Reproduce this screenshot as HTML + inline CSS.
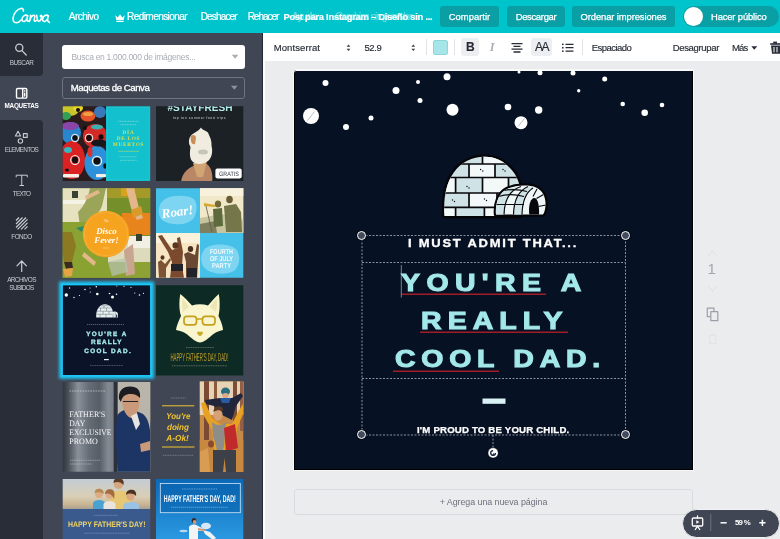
<!DOCTYPE html>
<html>
<head>
<meta charset="utf-8">
<title>Canva</title>
<style>
*{box-sizing:border-box;margin:0;padding:0}
html,body{width:780px;height:539px;overflow:hidden;background:#ebecee;font-family:"Liberation Sans",sans-serif;}
.abs{position:absolute}
#app{position:relative;width:780px;height:539px;overflow:hidden;background:#ebecee;will-change:transform}
/* top bar */
#top{position:absolute;left:0;top:0;width:780px;height:33px;background:#00c4cc}
#top .mi{position:absolute;top:10.3px;font-size:10px;-webkit-text-stroke:.2px #fff;color:#fff;white-space:nowrap;line-height:14px}
#top .btn{position:absolute;top:6px;height:21px;border-radius:3px;background:#0a9ea5;color:#fff;font-size:9.4px;-webkit-text-stroke:.25px #fff;line-height:21px;text-align:center;white-space:nowrap}
/* toolbar */
#tb{position:absolute;left:263px;top:33px;width:517px;height:28px;background:#fff}
#tb .t{position:absolute;top:7.8px;font-size:9.5px;line-height:13px;color:#272b36;-webkit-text-stroke:.15px #272b36;white-space:nowrap}
#tb .dv{position:absolute;top:6px;width:1px;height:16px;background:#e1e3e6}
/* sidebar */
#side{position:absolute;left:0;top:33px;width:43px;height:506px;background:#292d37}
#side .lab{position:absolute;left:0;width:43px;text-align:center;font-size:6.4px;line-height:8px;color:#c9ccd2;letter-spacing:-0.25px;z-index:3;white-space:nowrap}
#panel{position:absolute;left:43px;top:33px;width:220px;height:506px;background:#404654}
.th{position:absolute;overflow:hidden}
/* canvas */
#cv{position:absolute;left:294px;top:70px;width:399px;height:400px;background:#071124;border-radius:2.5px 0 0 0;box-shadow:0 0 0 1px #f8f8f9, inset 0 1px 0 #f8f8f9, inset -1px -1px 0 #000, inset 1px 0 0 #000}
.dot{position:absolute;background:#fff;border-radius:50%}
.hd{position:absolute;width:9.4px;height:9.4px;border-radius:50%;border:1.7px solid #fff;background:#434c5e;box-shadow:0 0 0 .8px rgba(0,0,0,.55)}
.dt{position:absolute;font-weight:bold;white-space:nowrap;line-height:1;transform-origin:0 0;transform:scaleX(1.16)}
.big{-webkit-text-stroke:1.1px #a3e8ea}
</style>
</head>
<body>
<div id="app">

<!-- ============ TOP BAR ============ -->
<div id="top">
  <svg class="abs" style="left:0;top:0" width="60" height="33" viewBox="0 0 60 33">
    <g fill="none" stroke="#fff" stroke-width="1.55" stroke-linecap="round" stroke-linejoin="round">
      <path d="M23.300 11.200c.5-1.700-.6-3-2.400-2.800-3.300.4-7.200 4.700-7.800 9.300-.4 3.200.8 5.100 3 5.100 1.800 0 3.600-1.100 5-2.900"/>
      <path d="M27.600 16.200c-.8-1.500-2.800-1.400-4.200.1-1.500 1.600-1.900 4-.7 4.900 1.200.9 3.200-.3 4.200-2.400l.9-3.100c-.5 1.800-1.200 4-.6 5.100.5.900 1.500.4 2.300-.6"/>
      <path d="M30.600 15.200c0 2.200-.7 4.300-1.100 6.200.6-2.300 2-5.400 3.900-6.100 1.300-.4 1.600.7 1.300 2-.3 1.300-.9 2.800-.3 3.600.5.600 1.300.2 2-.5"/>
      <path d="M36.700 15.300c.4 1.800.4 4.700 1.500 5.800 1.300 1 3.300-2 3.600-4.300.2-1.300-.5-1.900-1.200-1.300-.7.700.4 1.700 1.700 1.200"/>
      <path d="M48.200 16.200c-.8-1.500-2.800-1.400-4.200.1-1.500 1.600-1.900 4-.7 4.900 1.200.9 3.200-.3 4.200-2.400l.9-3.100c-.5 1.800-1.200 4-.6 5.100.5.900 1.300 1 1.700 1.700"/>
    </g>
  </svg>
  <div class="mi" id="m1" style="left:68.7px;letter-spacing:-0.48px">Archivo</div>
  <svg class="abs" style="left:114.700px;top:13.700px" width="10" height="8.400" viewBox="0 0 10 8" preserveAspectRatio="none"><path d="M0.300 1.200 L2.700 3.400 L5 0.200 L7.300 3.400 L9.700 1.200 L8.600 6 H1.400 Z M1.400 6.700 H8.600 V7.800 H1.400Z" fill="#fff"/></svg>
  <div class="mi" id="m2" style="left:127.0px;letter-spacing:-0.55px">Redimensionar</div>
  <div class="mi" id="m3" style="left:200.7px;letter-spacing:-0.83px">Deshacer</div>
  <div class="mi" id="m4" style="left:247.7px;letter-spacing:-1.04px">Rehacer</div>
  <div class="mi" id="m5" style="left:292.0px;opacity:.45;letter-spacing:-0.80px">Ayuda</div>
  <div class="mi" id="m6" style="left:335.0px;opacity:.4;font-style:italic;letter-spacing:-0.85px">Cambios sin guardar</div>
  <div class="mi" id="m7" style="left:283.4px;top:9.5px;font-weight:bold;font-size:9.4px;letter-spacing:-0.26px">Post para Instagram – Diseño sin ...</div>
  <div class="btn" style="left:440px;width:59px"><span id="b1" style=";letter-spacing:0.02px">Compartir</span></div>
  <div class="btn" style="left:507px;width:58px"><span id="b2" style=";letter-spacing:-0.29px">Descargar</span></div>
  <div class="btn" style="left:572px;width:103px"><span id="b3" style=";letter-spacing:-0.09px">Ordenar impresiones</span></div>
  <div class="btn" style="left:683px;width:96px;border-radius:11px;text-align:left;padding-left:28px"><span id="b4" style=";letter-spacing:-0.13px">Hacer público</span></div>
  <div class="abs" style="left:684px;top:7px;width:19px;height:19px;border-radius:50%;background:#fff"></div>
</div>

<!-- ============ SIDEBAR ============ -->
<div id="side">
  <div class="abs" style="left:0;top:0;width:43px;height:43px;background:#292d37;border-radius:0 0 4px 0;z-index:2"></div>
  <div class="abs" style="left:0;top:39px;width:43px;height:52px;background:#404654"></div>
  <div class="abs" style="left:0;top:87px;width:43px;height:419px;background:#292d37;border-radius:0 4px 0 0;z-index:2"></div>
  <svg class="abs" style="left:0;top:0;z-index:3" width="43" height="300" viewBox="0 33 43 300">
    <!-- search -->
    <g fill="none" stroke="#c9ccd2" stroke-width="1.300" stroke-linecap="round">
      <circle cx="19.300" cy="47.700" r="3.600"/><path d="M22 50.600 L26.200 55"/>
    </g>
    <!-- maquetas -->
    <g fill="none" stroke="#fff" stroke-width="1.400" stroke-linejoin="round">
      <rect x="16.500" y="88.500" width="10.300" height="9.600" rx="1.200"/>
      <path d="M22.700 88.500 V98"/>
    </g>
    <rect x="24" y="90.300" width="1.400" height="1.400" fill="#fff"/><rect x="24" y="92.700" width="1.400" height="3.800" fill="#fff"/>
    <!-- elementos -->
    <g fill="none" stroke="#c9ccd2" stroke-width="1.100" stroke-linejoin="round">
      <path d="M18 131.300 L20.600 136 H15.400 Z"/>
      <rect x="23.400" y="133.600" width="3.800" height="3.800"/>
      <circle cx="20.400" cy="141" r="2.200"/>
    </g>
    <!-- fondo -->
    <g stroke="#c9ccd2" stroke-width="1.200" stroke-linecap="butt">
      <path d="M16 220.500 L19 217.500 M16 224 L22.500 217.500 M16 227.500 L26 217.500 M17.500 229.300 L27.500 219.300 M21 229.300 L27.500 222.800 M24.500 229.300 L27.500 226.300"/>
    </g>
    <!-- upload -->
    <g fill="none" stroke="#c9ccd2" stroke-width="1.200" stroke-linecap="round" stroke-linejoin="round">
      <path d="M21.700 271.500 V261.200 M17 265.800 L21.700 261 L26.400 265.800"/>
    </g>
  </svg>
  <svg class="abs" style="left:14px;top:140px;z-index:3" width="16" height="14" viewBox="14 173 16 14"><g fill="none" stroke="#c9ccd2" stroke-width="1"><path d="M16.200 177.300 V175.200 H27.300 V177.300 M21.750 175.200 V185.300 M19.500 185.500 H24"/></g></svg>
  <div class="lab" id="s1" style="top:26.0px;letter-spacing:-0.53px">BUSCAR</div>
  <div class="lab" id="s2" style="top:69.0px;color:#fff;font-weight:bold">MAQUETAS</div>
  <div class="lab" id="s3" style="top:113.0px;letter-spacing:-0.66px">ELEMENTOS</div>
  <div class="lab" id="s4" style="top:156.5px;letter-spacing:-0.73px">TEXTO</div>
  <div class="lab" id="s5" style="top:200.0px;letter-spacing:-0.54px">FONDO</div>
  <div class="lab" id="s6" style="top:243.0px;letter-spacing:-0.58px">ARCHIVOS</div>
  <div class="lab" id="s7" style="top:251.0px;letter-spacing:-0.63px">SUBIDOS</div>
</div>

<!-- ============ PANEL ============ -->
<div id="panel">
  <div class="abs" style="left:18.500px;top:12px;width:183.500px;height:24.300px;background:#fff;border-radius:3px;font-size:8.5px;line-height:24px;color:#a9adb5;padding-left:10px"><span id="p1" style=";letter-spacing:-0.30px">Busca en 1.000.000 de imágenes...</span></div>
  <div class="abs" style="left:18.500px;top:43.800px;width:183.300px;height:22.500px;border:1px solid #6f7584;border-radius:3px;font-size:9.6px;line-height:19.500px;color:#fff;padding-left:8.300px;-webkit-text-stroke:.3px #fff"><span id="p2" style=";letter-spacing:-0.43px">Maquetas de Canva</span></div>
</div>

<svg id="thumbs" class="abs" style="left:0;top:0;text-rendering:geometricPrecision" width="263" height="539" viewBox="0 0 263 539">
<defs>
  <filter id="bl1" x="-10%" y="-10%" width="120%" height="120%"><feGaussianBlur stdDeviation="0.65"/></filter>
  <filter id="bl2" x="-10%" y="-10%" width="120%" height="120%"><feGaussianBlur stdDeviation="0.5"/></filter>
  <filter id="glow" x="-20%" y="-20%" width="140%" height="140%"><feGaussianBlur stdDeviation="1.6"/></filter>
  <clipPath id="c11"><rect x="62.700" y="106.200" width="87.500" height="74.800"/></clipPath>
  <clipPath id="c12"><rect x="156" y="106.200" width="87.300" height="74.800"/></clipPath>
  <clipPath id="c21"><rect x="62.700" y="188.200" width="87.500" height="89.600"/></clipPath>
  <clipPath id="c22"><rect x="156" y="188.200" width="87.300" height="89.600"/></clipPath>
  <clipPath id="c31"><rect x="62.700" y="285.200" width="87.500" height="89.800"/></clipPath>
  <clipPath id="c32"><rect x="156" y="285.200" width="87.300" height="90.300"/></clipPath>
  <clipPath id="c41"><rect x="62.700" y="382" width="87.500" height="89.800"/></clipPath>
  <clipPath id="c42"><rect x="199.800" y="381.600" width="43.500" height="90.400"/></clipPath>
  <clipPath id="c51"><rect x="62.700" y="479" width="87.500" height="60"/></clipPath>
  <clipPath id="c52"><rect x="156" y="479" width="87.300" height="60"/></clipPath>
  <linearGradient id="g52" x1="0" y1="0" x2="0" y2="1"><stop offset="0" stop-color="#0b68b6"/><stop offset="1" stop-color="#2b9ae2"/></linearGradient>
  <linearGradient id="g51" x1="0" y1="0" x2="0" y2="1"><stop offset="0" stop-color="#c3ccd6"/><stop offset=".6" stop-color="#d9cfb6"/><stop offset=".85" stop-color="#c9b593"/><stop offset="1" stop-color="#a9a090"/></linearGradient>
  <linearGradient id="g41" x1="0" y1="0" x2="1" y2="0">
    <stop offset="0" stop-color="#2e323a"/><stop offset=".07" stop-color="#4a4f58"/><stop offset=".18" stop-color="#8a919a"/><stop offset=".3" stop-color="#666d77"/><stop offset=".42" stop-color="#585e68"/><stop offset=".52" stop-color="#848a92"/><stop offset=".575" stop-color="#7a8088"/><stop offset=".585" stop-color="#2c303a"/><stop offset=".62" stop-color="#2c303a"/><stop offset=".63" stop-color="#a9abad"/><stop offset=".7" stop-color="#b5b3ac"/><stop offset="1" stop-color="#c3beb2"/>
  </linearGradient>
</defs>

<!-- ===== 1-1 skulls / dia de los muertos ===== -->
<g clip-path="url(#c11)">
  <rect x="62" y="106" width="45" height="76" fill="#2a1c1c"/>
  <g filter="url(#bl2)">
    <ellipse cx="70" cy="110" rx="9" ry="6" fill="#c9c42c"/><ellipse cx="66" cy="116" rx="5" ry="4" fill="#35a055"/>
    <ellipse cx="78" cy="108" rx="5" ry="4" fill="#e8d820"/>
    <ellipse cx="88" cy="116" rx="7.500" ry="5.500" fill="#e4532c"/><ellipse cx="88" cy="114" rx="5" ry="2" fill="#f0a040"/>
    <ellipse cx="100" cy="112" rx="6" ry="6" fill="#3a78b8"/>
    <ellipse cx="71" cy="133" rx="10" ry="11" fill="#2a86cc"/><ellipse cx="70" cy="126" rx="9" ry="4" fill="#8a44a8"/>
    <ellipse cx="95" cy="136" rx="12" ry="12" fill="#d22a28"/><ellipse cx="97" cy="127" rx="6" ry="2.500" fill="#3ab0b0"/>
    <ellipse cx="72" cy="160" rx="13" ry="19" fill="#da2424"/><ellipse cx="68" cy="150" rx="4" ry="3" fill="#30b8c0"/>
    <ellipse cx="97" cy="163" rx="12.500" ry="17" fill="#2e90da"/><ellipse cx="99" cy="143" rx="8" ry="3.500" fill="#15151c"/>
    <ellipse cx="90" cy="152" rx="2.500" ry="5" fill="#d83030"/>
    <g fill="#120c10"><ellipse cx="75" cy="138" rx="2.600" ry="2.800"/><ellipse cx="89" cy="138" rx="2.800" ry="3"/><ellipse cx="101" cy="137" rx="2.500" ry="2.800"/>
      <ellipse cx="75" cy="160" rx="3" ry="3.200"/><ellipse cx="97" cy="161" rx="3.400" ry="3.400"/><ellipse cx="105" cy="166" rx="1.800" ry="2.800"/><ellipse cx="67" cy="170" rx="2" ry="1.500"/>
      <ellipse cx="78" cy="110" rx="2" ry="2"/><ellipse cx="85" cy="128" rx="1.800" ry="2"/></g>
    <g fill="#f4f0e8"><ellipse cx="75" cy="160" rx="4.300" ry="4.500" fill="none" stroke="#f4f0e8" stroke-width="1.200"/><ellipse cx="97" cy="161" rx="4.600" ry="4.600" fill="none" stroke="#f4f0e8" stroke-width="1.200"/>
      <rect x="63" y="174" width="16" height="3.500" rx="1"/><rect x="96" y="174" width="10" height="3.200" rx="1"/>
      <ellipse cx="75" cy="138" rx="3.600" ry="3.800" fill="none" stroke="#f4f0e8" stroke-width="1"/><ellipse cx="89" cy="138" rx="3.800" ry="4" fill="none" stroke="#f4f0e8" stroke-width="1"/></g>
  </g>
  <rect x="106" y="106" width="45" height="76" fill="#13c0cd"/>
  <rect x="107.500" y="107.500" width="41.500" height="72" fill="none" stroke="#7fe0e6" stroke-width=".4" stroke-dasharray=".8 .8" opacity=".6"/>
  <g font-family="Liberation Serif" font-weight="bold" fill="#d9df52" text-anchor="middle">
    <text x="128.500" y="133.700" font-size="5.300" letter-spacing=".7">DÍA</text>
    <text x="128.500" y="140" font-size="5.300" letter-spacing=".7">DE LOS</text>
    <text x="128.500" y="146.300" font-size="5.300" letter-spacing=".7">MUERTOS</text>
  </g>
  <g stroke="#d8f0d8" stroke-width=".8" stroke-dasharray="1 .6" opacity=".6"><path d="M118.500 121.300 H138.500 M120.500 124.700 H136.500 M119.500 156.800 H137 M120 160.300 H136.500"/></g>
  <path d="M118 151.300 H139" stroke="#d9df52" stroke-width=".5"/>
</g>

<!-- ===== 1-2 stayfresh ===== -->
<g clip-path="url(#c12)">
  <rect x="155" y="106" width="89" height="76" fill="#1b2125"/>
  <text x="200" y="110.600" font-family="Liberation Sans" font-weight="bold" font-size="10.500" fill="#b3ecec" text-anchor="middle" textLength="65" lengthAdjust="spacingAndGlyphs">#STAYFRESH</text>
  <text x="199.500" y="118.800" font-family="Liberation Sans" font-size="3.600" fill="#c8cccc" text-anchor="middle" letter-spacing=".5">top ten summer food trips</text>
  <g filter="url(#bl1)">
    <path d="M181 182 C182 172 190 166 197 165 L207 164 C212 168 213 176 212 182 Z" fill="#b98765"/>
    <path d="M193 163 L207 161 L203 177 L197 177 Z" fill="#d2a574"/>
    <path d="M201 127.500 C202 130 205 130 208 132.500 C209 136 212 139 211.500 146 C213 151 212 158 208 161 C203 165 195 165 192 161 C189 157 190 151 190.500 147 C187.500 142 189 136 193.500 133.500 C196 131.500 199 130.500 201 127.500 Z" fill="#f0ece0"/>
    <path d="M191 136 C193 134 196 135 196 138 L195 144 C192 145 190 142 191 136Z" fill="#c98e58"/>
    <ellipse cx="203" cy="152" rx="5" ry="2.500" fill="#b9bcae" opacity=".8"/>
  </g>
  <rect x="215.400" y="168.600" width="26.300" height="9.800" rx="1.800" fill="#fff"/>
  <text transform="translate(229 175.900) scale(.86 1)" font-family="Liberation Sans" font-size="6.300" fill="#30343c" text-anchor="middle">GRATIS</text>
</g>

<!-- ===== 2-1 disco fever ===== -->
<g clip-path="url(#c21)">
  <rect x="62" y="188" width="89" height="90" fill="#869a30"/>
  <g filter="url(#bl1)">
    <rect x="62" y="188" width="46" height="34" fill="#e6e2bf"/>
    <rect x="62" y="200" width="30" height="4" fill="#f4f2e4"/>
    <path d="M90 188 L106 188 L102 206 C98 216 88 224 80 226 L78 212 C84 206 88 198 90 188Z" fill="#9aa55a"/>
    <rect x="72" y="191" width="6" height="7" fill="#3a4034"/>
    <path d="M85 196 L98 190 L100 193 L86 200Z" fill="#e2b78a"/>
    <rect x="107" y="188" width="44" height="48" fill="#75902a"/>
    <rect x="107" y="188" width="44" height="10" fill="#a39a2c"/>
    <rect x="121" y="188" width="14" height="8" fill="#d9a21e"/>
    <rect x="122" y="213" width="29" height="22" fill="#e8841f"/>
    <path d="M126 188 L134 188 L139 208 L143 218 L137 220 L131 208 Z" fill="#e4b78a"/>
    <path d="M131 210 L141 206 L143 214 L133 218Z" fill="#d99a2a"/>
    <rect x="107" y="236" width="44" height="42" fill="#dedabc"/>
    <rect x="107" y="262" width="44" height="16" fill="#8ca236"/>
    <rect x="128" y="236" width="23" height="12" fill="#f2f0e4"/>
    <rect x="136" y="234" width="6" height="7" fill="#3a4034"/>
    <path d="M124 250 L133 244 L135 274 L126 276Z" fill="#c9a48e"/>
    <path d="M108 262 L126 258 L128 272 L112 276Z" fill="#b8c4b0" opacity=".7"/>
    <rect x="62" y="222" width="46" height="56" fill="#8aa232"/>
    <path d="M62 232 L72 232 L76 246 L72 262 L64 262 L62 250Z" fill="#8b7a22"/>
    <path d="M64 262 L72 262 L73 268 L66 269Z" fill="#3a2a20"/>
    <path d="M63 269 L73 268 L72 276 L65 277Z" fill="#e2a444"/>
    <path d="M84 252 L96 262 L94 266 L82 256Z" fill="#e4b78a"/>
    <path d="M76 228 L84 226 L82 232Z" fill="#2a8a6a"/>
  </g>
  <circle cx="106" cy="234" r="23.200" fill="#f6a31f"/>
  <circle cx="106" cy="234" r="21.600" fill="none" stroke="#fbd59a" stroke-width=".5" stroke-dasharray=".7 .7"/>
  <g font-family="Liberation Serif" font-style="italic" font-weight="bold" fill="#fff" text-anchor="middle">
    <text x="106.500" y="233.500" font-size="8.800">Disco</text>
    <text x="106.500" y="242.500" font-size="8.800">Fever!</text>
    <text x="106" y="221.500" font-size="3.600" font-weight="normal">70s</text>
  </g>
  <path d="M103 248 H109" stroke="#fbd59a" stroke-width=".6"/>
</g>
<!-- ===== 2-2 roar / fourth of july ===== -->
<g clip-path="url(#c22)">
  <rect x="155" y="188" width="89" height="90" fill="#45c0e8"/>
  <g filter="url(#bl2)">
    <path d="M160 205 C163 196 178 194 190 197 C198 199 198 210 194 218 C188 226 170 226 162 220 C158 215 158 210 160 205Z" fill="#7ed5f1"/>
    <path d="M204 250 C210 243 228 243 236 249 C241 255 240 266 234 271 C224 276 208 274 203 266 C200 260 201 254 204 250Z" fill="#7ed5f1"/>
  </g>
  <text x="177.500" y="216" font-family="Liberation Serif" font-style="italic" font-weight="bold" font-size="13" fill="#fff" text-anchor="middle" transform="rotate(-8 177.500 212)">Roar!</text>
  <g font-family="Liberation Sans" font-weight="bold" fill="#f2fbfe" text-anchor="middle" font-size="7">
    <text x="221.500" y="253.800" textLength="23" lengthAdjust="spacingAndGlyphs">FOURTH</text>
    <text x="221.500" y="260.800" textLength="23" lengthAdjust="spacingAndGlyphs">OF JULY</text>
    <text x="221.500" y="267.800" textLength="19" lengthAdjust="spacingAndGlyphs">PARTY</text>
  </g>
  <!-- TR photo -->
  <rect x="200" y="188" width="44" height="45" fill="#f1e8c9"/>
  <g filter="url(#bl1)">
    <rect x="200" y="188" width="44" height="8" fill="#f8f2dc"/>
    <path d="M200 218 L222 214 L244 220 L244 233 L200 233Z" fill="#c9c4a0"/>
    <path d="M200 224 L215 221 L217 233 L200 233Z" fill="#7e7f5c"/>
    <ellipse cx="218" cy="204" rx="3.200" ry="3.500" fill="#6f6a3a"/>
    <path d="M213 209 L222 208 L223 226 L214 227Z" fill="#5d6a3a"/>
    <path d="M204 203 L215 205 L215 207 L204 206Z" fill="#d8a830"/>
    <ellipse cx="229.500" cy="199.500" rx="3.300" ry="3.800" fill="#6a5c34"/>
    <path d="M224 206 L236 204 L241 212 L242 232 L226 232 Z" fill="#75764a"/>
    <path d="M206 206 L212 232" stroke="#5a5a48" stroke-width=".8"/>
  </g>
  <!-- BL photo -->
  <rect x="155" y="233" width="45" height="45" fill="#f6e4c2"/>
  <g filter="url(#bl1)">
    <rect x="155" y="233" width="45" height="10" fill="#fbf2dc"/>
    <path d="M158 236 L162 235 L172 250 L178 248 L177 238 L180 237 L183 252 L182 266 L184 278 L170 278 L172 262 L168 252 Z" fill="#7a4a2e"/>
    <ellipse cx="175.500" cy="245.500" rx="3" ry="3.300" fill="#5a3422"/>
    <path d="M171 264 H183 V271 H171Z" fill="#22222a"/>
    <path d="M184 254 L188 252 L195 255 L197 244 L199 245 L198 262 L197 278 L186 278 L186 262Z" fill="#6a4630"/>
    <ellipse cx="190.500" cy="249" rx="2.700" ry="3" fill="#4a2e20"/>
    <path d="M187 268 H197 V278 H187Z" fill="#22242c"/>
    <path d="M158 262 L161 260 L165 264 L170 258 L171 260 L166 268 L166 278 L159 278 Z" fill="#7e5236"/>
    <ellipse cx="162.500" cy="257.500" rx="2" ry="2.300" fill="#55341f"/>
  </g>
</g>

<!-- ===== 3-1 selected (cool dad) ===== -->
<rect x="61.300" y="283.800" width="90.400" height="92.700" fill="none" stroke="#18c8f8" stroke-width="4.400" filter="url(#glow)"/>
<rect x="62.700" y="285.200" width="87.500" height="89.900" fill="#0a1328"/>
<g clip-path="url(#c31)">
  <g fill="#fff">
    <circle cx="66.300" cy="295" r="1.700"/><circle cx="69.500" cy="288" r=".7"/><circle cx="74" cy="297.500" r=".7"/><circle cx="79.500" cy="295.500" r=".6"/><circle cx="85" cy="289.500" r=".8"/>
    <circle cx="90" cy="288" r=".5"/><circle cx="90.300" cy="292" r=".6"/><circle cx="96.300" cy="286.800" r=".8"/><circle cx="97.300" cy="294" r="1.300"/><circle cx="109.500" cy="293.500" r=".8"/>
    <circle cx="112.500" cy="297" r="1.500"/><circle cx="116.500" cy="294.300" r=".8"/><circle cx="116.800" cy="286" r=".6"/><circle cx="124" cy="286.300" r=".6"/><circle cx="131" cy="287.300" r=".6"/><circle cx="134.800" cy="293" r=".6"/><circle cx="139.500" cy="295" r=".8"/><circle cx="143.500" cy="293.300" r=".6"/>
  </g>
  <path d="M96.200 317.500 C95.800 309 100 304.300 105 304.300 C110 304.300 112.800 308.500 112.800 312 C115 311 118 311.500 118 314.500 L118 317.500 Z" fill="#e6f0f1"/>
  <g stroke="#26303e" stroke-width=".35" fill="none"><path d="M96.500 314.300 H112 M97 311.200 H112.600 M98.500 308 H111.500 M101 305.800 H109 M100 314.300 V317.500 M106 314.300 V317.500 M103 311.200 V314.300 M109 311.200 V314.300 M100.500 308 V311.200 M106.500 308 V311.200 M104 305.800 V308 M113 313.500 V317.500 M115.300 312.500 V317.500"/></g>
  <rect x="116.200" y="314.600" width="1" height="2.900" fill="#0a1328"/>
  <path d="M87 324.400 H124" stroke="#c9ced6" stroke-width=".8" stroke-dasharray="1.300 .7" opacity=".55"/>
  <g font-family="Liberation Sans" font-weight="bold" fill="#a3e8ea" stroke="#a3e8ea" stroke-width=".35" text-anchor="middle" font-size="6.300">
    <text x="106.200" y="335.600" textLength="40" lengthAdjust="spacing">YOU'RE A</text>
    <text x="106.200" y="344.100" textLength="30.500" lengthAdjust="spacing">REALLY</text>
    <text x="107.500" y="352.800" textLength="46.500" lengthAdjust="spacing">COOL DAD.</text>
  </g>
  <rect x="104" y="359" width="4.800" height="1.200" fill="#e2f4f5"/>
  <path d="M90 365.600 H123" stroke="#b4bac4" stroke-width=".8" stroke-dasharray="1.100 .6" opacity=".55"/>
</g>
<rect x="62" y="284.500" width="89" height="91.300" fill="none" stroke="#1bc8f6" stroke-width="1.500"/>

<!-- ===== 3-2 fox ===== -->
<g clip-path="url(#c32)">
  <rect x="155" y="285" width="89" height="92" fill="#0d2a24"/>
  <path d="M180.300 294 C184 297 189 302 192 305.500 C197 303.800 203 303.800 208 305.500 C211 302 215.500 297 218.800 294 C220 301 220 310 218.500 316 C221 321 223 327 223 330 C218 331 214 333 211 336 C207.500 339 203 342.500 200 342.500 C197 342.500 192.500 339 189 336 C186 333 182 331 176 330 C176.500 326 178.500 321 181 316 C179 310 179 301 180.300 294 Z" fill="#f8f5cf"/>
  <path d="M182.500 298 C185 301 187 304 189 307 L183 312 C182 307 182 302 182.500 298Z M216.700 298 C214 301 212 304 210 307 L216 312 C217.200 307 217.200 302 216.700 298Z" fill="#ece6b4"/>
  <g fill="none" stroke="#c4a21e" stroke-width="1.700">
    <rect x="184" y="316.300" width="12.500" height="8.600" rx="2.800"/><rect x="202.500" y="316.300" width="12.500" height="8.600" rx="2.800"/>
    <path d="M196.500 319 H202.500"/>
  </g>
  <path d="M197 331.800 H203 C203 334.500 201 336 200 336 C199 336 197 334.500 197 331.800Z" fill="#c9a822"/>
  <path d="M186 347.600 H214" stroke="#d8d6b6" stroke-width=".8" stroke-dasharray="1.100 .6" opacity=".5"/>
  <text x="199.400" y="360.600" font-family="Liberation Sans" font-size="11.400" fill="#c9a227" text-anchor="middle" textLength="58" lengthAdjust="spacingAndGlyphs">HAPPY FATHER'S DAY, DAD!</text>
  <path d="M172 365.800 H227" stroke="#d8d6b6" stroke-width=".8" stroke-dasharray="1.100 .6" opacity=".5"/>
</g>
<!-- ===== 4-1 father's day promo ===== -->
<g clip-path="url(#c41)">
  <rect x="62" y="381" width="89" height="92" fill="url(#g41)"/>
  <g filter="url(#bl1)">
    <rect x="118" y="382" width="33" height="40" fill="#b9b5aa"/>
    <path d="M117 416 C120 410 128 408 134 410 L143 414 C148 418 150 426 150.500 436 L150.500 472 L118 472 C116 452 115 432 117 416Z" fill="#1d3465"/>
    <path d="M122 398 C122 392 126 388 131 388 C137 388 140 392 139.500 399 C139.500 408 137 417 132 418 C127 418 122 410 122 398Z" fill="#c9997a"/>
    <path d="M119 399 C118 391 123 386.500 130 386.500 C137 386.500 141 390 140 398 C137 395 134 393.500 130 394 C126 394 122 396 121 402Z" fill="#1b1b22"/>
    <path d="M131 416 L137 413 L140 424 L136 430Z" fill="#e6e4e0"/>
    <path d="M123 401.500 H138" stroke="#22222a" stroke-width="1"/>
    <path d="M140 444 L150 441 L150 450 L141 452Z" fill="#c9997a"/>
  </g>
  <path d="M69.500 391 H106" stroke="#e4e6ea" stroke-width="1.200" stroke-dasharray="1.600 1" opacity=".6"/>
  <g font-family="Liberation Serif" fill="#f4f5f7" font-size="8.300">
    <text x="69.300" y="417.300" textLength="36" lengthAdjust="spacingAndGlyphs">FATHER'S</text>
    <text x="69.300" y="426.100" textLength="16" lengthAdjust="spacingAndGlyphs">DAY</text>
    <text x="69.300" y="434.900" textLength="42" lengthAdjust="spacingAndGlyphs">EXCLUSIVE</text>
    <text x="69.300" y="443.700" textLength="28.500" lengthAdjust="spacingAndGlyphs">PROMO</text>
  </g>
  <g stroke="#e4e6ea" stroke-width=".8" stroke-dasharray="1.200 .6" opacity=".5"><path d="M70 460.300 H100 M70 464 H92"/></g>
</g>

<!-- ===== 4-2 you're doing a-ok ===== -->
<rect x="156" y="381.600" width="44" height="90.400" fill="#404654"/>
<g clip-path="url(#c42)">
  <rect x="199" y="381" width="45" height="92" fill="#c58a48"/>
  <g filter="url(#bl1)">
    <rect x="199" y="381" width="45" height="34" fill="#e6d3b6"/>
    <rect x="204" y="381" width="5" height="62" fill="#7a4b33"/><rect x="214" y="381" width="3" height="30" fill="#8a5a3e"/><rect x="233" y="381" width="4" height="40" fill="#7d4d35"/><rect x="240" y="381" width="3" height="50" fill="#946044"/>
    <rect x="199" y="440" width="45" height="32" fill="#c8883f"/>
    <path d="M199 452 L208 448 L210 472 L199 472Z" fill="#d89c52"/>
    <!-- kid -->
    <ellipse cx="225.500" cy="391.500" rx="4.500" ry="4" fill="#2b6c82"/>
    <ellipse cx="225.500" cy="395.500" rx="3.300" ry="2.600" fill="#d9a988"/>
    <path d="M205 400 L220 398 L232 398 L241 393 L243 396 L236 406 L232 420 L220 414 L214 406 L206 404Z" fill="#22283a"/>
    <path d="M220 398 H231 L229 403 H222Z" fill="#2a5aa0"/>
    <!-- man arms / jacket -->
    <path d="M201 403 L205 402 L212 418 L220 424 L232 424 L238 412 L243 404 L243 414 L237 428 L234 450 L214 450 L212 430 L204 416Z" fill="#e8a122"/>
    <ellipse cx="218" cy="415" rx="4.600" ry="5.500" fill="#d8a174"/>
    <path d="M213.500 412 C213.500 408 216 406.500 219 406.500 C222 406.500 223.500 408.500 223 411 C220 409.500 216 410 213.500 412Z" fill="#5a3a26"/>
    <path d="M212 422 C216 426 222 426 226 422 L224 446 L219 462 L216 446 L213 436Z" fill="#8e8d89"/>
    <path d="M224 428 L235 424 L238 448 L226 452Z" fill="#c12a2a"/>
    <path d="M213 450 H236 L236 472 H226 L224.500 458 L223 472 H213Z" fill="#3a4149"/>
    <ellipse cx="211" cy="444" rx="3" ry="3.500" fill="#8a4a30"/>
  </g>
</g>
<path d="M171 398 H186" stroke="#c4c8d0" stroke-width=".8" stroke-dasharray="1.100 .6" opacity=".5"/>
<path d="M162 405.800 H194.300 M162 447 H194.500" stroke="#f0c232" stroke-width="1"/>
<g font-family="Liberation Sans" font-style="italic" font-weight="bold" fill="#f2c531" font-size="8.600">
  <text x="166.300" y="418.800" textLength="24" lengthAdjust="spacingAndGlyphs">You're</text>
  <text x="167" y="430" textLength="22" lengthAdjust="spacingAndGlyphs">doing</text>
  <text x="166.300" y="440.500" textLength="22.500" lengthAdjust="spacingAndGlyphs">A-Ok!</text>
</g>
<path d="M163 455.300 H193" stroke="#c4c8d0" stroke-width=".8" stroke-dasharray="1.100 .6" opacity=".5"/>

<!-- ===== 5-1 happy father's day (family) ===== -->
<g clip-path="url(#c51)">
  <rect x="62" y="478" width="89" height="31" fill="url(#g51)"/>
  <g filter="url(#bl1)">
    <ellipse cx="118.500" cy="484" rx="4.700" ry="5" fill="#d6a680"/><path d="M113.500 483 C113.500 478 118 477 121 478.500 C124 480 124 483 123.500 485 C121 482 117 481 113.500 483Z" fill="#5a3b28"/>
    <path d="M110 496 C112 491 118 490 124 491 C130 492 132 498 132 510 L110 510Z" fill="#e6c774"/>
    <ellipse cx="99" cy="494" rx="4" ry="4.300" fill="#dcae88"/><path d="M94.500 493 C94.500 489 98 488 101 489 C103.500 490 104 492.500 103.500 494 C101 492 97 491.500 94.500 493Z" fill="#b88a52"/>
    <path d="M93 503 C94 499 104 499 105 503 L105 510 L93 510Z" fill="#4aa2d2"/>
    <ellipse cx="109.500" cy="494.500" rx="3.800" ry="4.300" fill="#dcab86"/><path d="M105 494 C105 489.500 109 488.500 112 489.500 C114.500 490.500 115 494 114 499 C112 494 108 492.500 105 494Z" fill="#a46a40"/>
    <path d="M103.500 504 C105 500 114 500 115.500 504 L115.500 510 L103.500 510Z" fill="#ebe3dc"/>
    <ellipse cx="130.500" cy="496" rx="4.200" ry="4.500" fill="#d9a780"/><path d="M126 495 C126 490 130 489 133.500 490 C136 491 136.500 494 136 496 C133 493 129 493 126 495Z" fill="#4a3020"/>
    <path d="M123 505 C125 501 137 501 139 505 L139 510 L123 510Z" fill="#9ac2e4"/>
  </g>
  <rect x="62" y="509" width="89" height="31" fill="#3a5a8e"/>
  <path d="M94 515.300 H118" stroke="#b9c6dc" stroke-width=".8" stroke-dasharray="1.100 .6" opacity=".5"/>
  <text x="106.700" y="526.700" font-family="Liberation Sans" font-weight="bold" font-size="8" fill="#f1d364" text-anchor="middle" textLength="77.500" lengthAdjust="spacingAndGlyphs">HAPPY FATHER'S DAY!</text>
  <path d="M84 533.200 H130" stroke="#b9c6dc" stroke-width=".8" stroke-dasharray="1.100 .6" opacity=".5"/>
</g>

<!-- ===== 5-2 happy father's day dad (blue) ===== -->
<g clip-path="url(#c52)">
  <rect x="155" y="478" width="89" height="62" fill="url(#g52)"/>
  <rect x="160.300" y="483.500" width="80" height="29.200" fill="#0a63ad" fill-opacity=".55" stroke="#cfe6f8" stroke-width=".8"/>
  <path d="M182 489 H217" stroke="#d9ecfa" stroke-width=".8" stroke-dasharray="1.100 .6" opacity=".5"/>
  <text x="199.700" y="501.600" font-family="Liberation Sans" font-weight="bold" font-size="9.800" fill="#fff" text-anchor="middle" textLength="72" lengthAdjust="spacingAndGlyphs">HAPPY FATHER'S DAY, DAD!</text>
  <path d="M171 507.300 H228" stroke="#e6f2fc" stroke-width=".7" stroke-dasharray="1.500 .5" opacity=".5"/>
  <g filter="url(#bl2)">
    <ellipse cx="206" cy="526" rx="5" ry="3.300" fill="#d6e8f6"/><ellipse cx="183.500" cy="531" rx="4" ry="1.200" fill="#b9d8f0"/>
    <ellipse cx="194" cy="520.500" rx="2.300" ry="2.600" fill="#3a2a22"/><ellipse cx="194.600" cy="522" rx="1.800" ry="2" fill="#c99a78"/>
    <path d="M189 527 C190 524 196 523.500 198 526 L204 529 L204 531 L198 531 L198 540 L189 540Z" fill="#f2f4f6"/>
    <path d="M203 530 L210 532 L216 538 L213 540 L205 534Z" fill="#eef2f6"/>
    <path d="M198 528 L206 529.500 L206 531 L198 530.500Z" fill="#c99a78"/>
  </g>
</g>
</svg>

<svg class="abs" style="left:228px;top:50px" width="14" height="46" viewBox="228 50 14 46">
  <path d="M231.800 54.800 H238.400 L235.100 58.800Z" fill="#a9adb5"/>
  <path d="M231 85.800 H237.600 L234.300 89.800Z" fill="#8c92a0"/>
</svg>

<!-- ============ TOOLBAR ============ -->
<div id="tb">
  <div class="t" id="t1" style="left:10.7px;letter-spacing:0.10px">Montserrat</div>
  <div class="t" id="t2" style="left:101.5px;letter-spacing:-0.43px">52.9</div>
  <svg class="abs" style="left:0;top:0" width="517" height="28" viewBox="263 33 517 28">
    <!-- spinners -->
    <g fill="#3a3f4b">
      <path d="M348.500 44.500 L350.400 46.800 H346.600 Z M348.500 51 L350.400 48.700 H346.600 Z"/>
      <path d="M413.300 44.500 L415.200 46.800 H411.400 Z M413.300 51 L415.200 48.700 H411.400 Z"/>
    </g>
    <!-- align center -->
    <g stroke="#292d37" stroke-width="1.300">
      <path d="M511.500 43.600 H522.500 M513.500 46.400 H520.500 M511.500 49.200 H522.500 M513.500 52 H520.500"/>
    </g>
    <!-- list -->
    <g stroke="#292d37" stroke-width="1.300">
      <path d="M565.500 44.300 H573.500 M565.500 47.700 H573.500 M565.500 51.100 H573.500"/>
    </g>
    <g fill="#292d37"><rect x="562" y="43.600" width="1.600" height="1.500"/><rect x="562" y="47" width="1.600" height="1.500"/><rect x="562" y="50.400" width="1.600" height="1.500"/></g>
    <!-- Mas caret -->
    <path d="M751.300 46.200 H757.300 L754.300 49.800 Z" fill="#292d37"/>
    <!-- trash -->
    <g fill="#292d37">
      <rect x="770.200" y="43.200" width="9.800" height="1.600"/>
      <rect x="773.200" y="41.600" width="3.800" height="2"/>
      <path d="M771 45.600 H780 V53.800 H772 Z"/>
    </g>
    <g stroke="#fff" stroke-width="1"><path d="M774 47 V52.300 M777 47 V52.300"/></g>
  </svg>
  <div class="dv" style="left:163px"></div>
  <div class="abs" style="left:170px;top:7px;width:15px;height:15px;background:#a6e6e9;border:1px solid #8fd6da;border-radius:2px"></div>
  <div class="dv" style="left:191px"></div>
  <div class="abs" style="left:198px;top:5px;width:18px;height:18px;background:#eceef1;border-radius:3px"></div>
  <div class="t" id="t3" style="left:203px;top:7.500px;font-weight:bold;font-size:12px">B</div>
  <div class="t" id="t4" style="left:227px;top:7.500px;font-family:'Liberation Serif',serif;font-style:italic;font-size:12.500px;color:#b4b8bf">I</div>
  <div class="abs" style="left:268px;top:5px;width:21px;height:18px;background:#eceef1;border-radius:3px"></div>
  <div class="t" id="t5" style="left:272.0px;top:7.500px;font-size:12px;letter-spacing:-1.62px">AA</div>
  <div class="dv" style="left:319px"></div>
  <div class="t" id="t6" style="left:328.7px;letter-spacing:-0.52px">Espaciado</div>
  <div class="t" id="t7" style="left:409.7px;letter-spacing:-0.33px">Desagrupar</div>
  <div class="t" id="t8" style="left:469.0px;letter-spacing:-0.83px">Más</div>
</div>

<div class="abs" style="left:262px;top:33px;width:1px;height:506px;background:#232835"></div>
<div class="abs" style="left:263px;top:61px;width:2.200px;height:478px;background:#fdfdfd"></div>
<!-- ============ CANVAS ============ -->
<div id="cv">
  <svg class="abs" style="left:0;top:0" width="399" height="400" viewBox="0 0 399 400">
    <g fill="#fff"><circle cx="31.5" cy="13.0" r="3.0"/><circle cx="17.0" cy="46.0" r="8.0"/><circle cx="52.0" cy="57.0" r="3.0"/><circle cx="77.0" cy="48.0" r="2.5"/><circle cx="102.0" cy="20.5" r="3.5"/><circle cx="124.0" cy="12.0" r="2.0"/><circle cx="126.0" cy="30.5" r="2.5"/><circle cx="153.0" cy="6.7" r="3.5"/><circle cx="158.5" cy="39.7" r="6.0"/><circle cx="225.0" cy="2.0" r="1.5"/><circle cx="246.0" cy="2.7" r="2.5"/><circle cx="279.0" cy="3.0" r="2.5"/><circle cx="310.7" cy="9.0" r="2.5"/><circle cx="284.7" cy="20.7" r="1.7"/><circle cx="214.0" cy="37.0" r="3.3"/><circle cx="244.7" cy="40.0" r="3.7"/><circle cx="227.0" cy="52.7" r="6.5"/><circle cx="328.7" cy="34.0" r="2.3"/><circle cx="350.7" cy="42.7" r="3.3"/><circle cx="368.0" cy="35.0" r="2.3"/></g>
    <g stroke="#9aa3ad" stroke-width="0.700"><path d="M13.500 50.500 L20.500 41.500"/><path d="M224 56.500 L230.500 48.500"/></g>
    <!-- IGLOO placeholder -->
    <g id="igloo" transform="translate(-294,-70)">
      <defs><clipPath id="dome"><path d="M444.600 216 C443 200 446 183 453.600 172.700 C461 162 473 156.500 485.400 156.800 C497 157 507 163 514 172.700 C518 178.500 520.500 186 520.500 193 L520.500 216 Z"/></clipPath>
      <clipPath id="tun"><path d="M496 214.500 C495 203 499 193 507 189 C515 185 529 184.500 536 187.500 C543 190.500 546 198 545.500 205 C545.300 209 544.500 212.500 543 214.500 Z"/></clipPath></defs>
      <path d="M444.600 216 C443 200 446 183 453.600 172.700 C461 162 473 156.500 485.400 156.800 C497 157 507 163 514 172.700 C518 178.500 520.500 186 520.500 193 L520.500 216 Z" fill="#cfe2e5" stroke="#050508" stroke-width="4.600" stroke-linejoin="round"/>
      <g clip-path="url(#dome)">
        <rect x="440" y="150" width="85" height="70" fill="#cfe2e5"/>
        <g fill="#f3f9f9">
          <rect x="482.500" y="150" width="40" height="14"/>
          <rect x="469" y="164" width="26" height="13.500"/>
          <rect x="440" y="177.500" width="15.600" height="15.500"/><rect x="482.500" y="177.500" width="26" height="15.500"/>
          <rect x="469" y="193" width="28" height="14.300"/>
          <rect x="440" y="207.300" width="15.600" height="10"/><rect x="484.400" y="207.300" width="14" height="10"/>
        </g>
        <g stroke="#08080c" stroke-width="1.700" fill="none">
          <path d="M440 164 H525 M440 177.500 H525 M440 193 H525 M440 207.300 H525"/>
          <path d="M482.500 150 V164 M469 164 V177.500 M495 164 V177.500 M455.600 177.500 V193 M482.500 177.500 V193 M508.500 177.500 V193 M469 193 V207.300 M497 193 V207.300 M455.600 207.300 V218 M484.400 207.300 V218"/>
        </g>
        <g fill="#08080c"><circle cx="480.600" cy="169.500" r=".7"/><circle cx="482.800" cy="171" r=".7"/><circle cx="503" cy="169.500" r=".7"/><circle cx="505" cy="171" r=".7"/><circle cx="467" cy="186.500" r=".7"/><circle cx="469" cy="188" r=".7"/><circle cx="452.500" cy="200" r=".7"/><circle cx="454.500" cy="201.500" r=".7"/><circle cx="484.500" cy="199" r=".7"/><circle cx="486.500" cy="200.500" r=".7"/></g>
      </g>
      <path d="M496 214.500 C495 203 499 193 507 189 C515 185 529 184.500 536 187.500 C543 190.500 546 198 545.500 205 C545.300 209 544.500 212.500 543 214.500 Z" fill="#e9f3f3" stroke="#050508" stroke-width="4.400" stroke-linejoin="round"/>
      <g clip-path="url(#tun)">
        <rect x="494" y="184" width="54" height="32" fill="#eef6f6"/>
        <path d="M494 216 V203 C497 196 502 191 510 188 L520 187 C512 191 506 197 504 216 Z" fill="#cfe2e5"/>
        <path d="M514 216 C514 200 518 191 527 186.500 L534 187 C525 192 521 200 521 216 Z" fill="#cfe2e5"/>
        <g stroke="#08080c" stroke-width="1.200" fill="none">
          <path d="M504 216 C504 200 510 190 521 186.500"/><path d="M513.500 216 C513.500 200 518 191 528 186.500"/><path d="M522 216 C522 202 525 193 533 188"/>
          <path d="M496 204.500 H524 M498.500 196.500 C506 194 515 194 524 196.500 M504 190.500 C512 189 520 189.500 527 191.500"/>
        </g>
        <path d="M529.500 216 C528 207 530 198.500 534.200 198 C538 198 539.500 206 539 216 Z" fill="#08080c"/>
        <g stroke="#08080c" stroke-width="1.100" fill="none"><path d="M538.500 206.500 L546 205 M536.500 198.500 L543.500 194.500 M533 196.500 L537 189"/></g>
      </g>
    </g>
    <!-- red spell underlines -->
    <g stroke="#a01c26" stroke-width="1.500" fill="none">
      <path d="M107 224.300 H252"/><path d="M126 262.300 H274"/><path d="M99 301.300 H205"/>
    </g>
    <!-- text cursor -->
    <path d="M107.300 195 V227.500" stroke="#76828f" stroke-width="1"/>
    <!-- little dash bar -->
    <rect x="188.500" y="328.500" width="23" height="5.300" fill="#d9f2f4"/>
    <!-- selection dashed box -->
    <g stroke="#98a0ab" stroke-width="0.900" fill="none" stroke-dasharray="2 1.500">
      <rect x="68" y="165.500" width="263.500" height="199.500"/>
      <path d="M68 192.500 H331.500 M68 308.500 H331.500"/>
      <path d="M199 365 V378"/>
    </g>
  </svg>
  <div class="dt" id="d1" style="left:114.4px;top:168.300px;font-size:11.200px;color:#fff;-webkit-text-stroke:.3px #fff;letter-spacing:1.52px">I MUST ADMIT THAT...</div>
  <div class="dt big" id="d2" style="left:107.0px;top:201.200px;font-size:24.500px;color:#a3e8ea;letter-spacing:5.54px">YOU'RE A</div>
  <div class="dt big" id="d3" style="left:127.4px;top:238.700px;font-size:24.500px;color:#a3e8ea;letter-spacing:5.26px">REALLY</div>
  <div class="dt big" id="d4" style="left:100.6px;top:277px;font-size:24.500px;color:#a3e8ea;letter-spacing:4.98px">COOL DAD.</div>
  <div class="dt" id="d5" style="left:123.0px;top:356px;font-size:8.300px;color:#fff;-webkit-text-stroke:.25px #fff;letter-spacing:0.16px">I'M PROUD TO BE YOUR CHILD.</div>
  <div class="hd" style="left:62.800px;top:160.900px"></div>
  <div class="hd" style="left:326.800px;top:160.900px"></div>
  <div class="hd" style="left:62.800px;top:360px"></div>
  <div class="hd" style="left:326.800px;top:360px"></div>
  <svg class="abs" style="left:193px;top:377px" width="12" height="12" viewBox="0 0 12 12">
    <circle cx="6.100" cy="5.900" r="5.100" fill="#fff" stroke="#000" stroke-opacity=".5" stroke-width=".8"/>
    <path d="M8.500 6 A2.400 2.400 0 1 1 6.100 3.600" fill="none" stroke="#18213a" stroke-width="1.300"/>
    <path d="M5.200 7.600 L7.600 8.300 L7 5.900Z" fill="#18213a"/>
  </svg>
</div>

<!-- add page -->
<div class="abs" style="left:294px;top:489px;width:399px;height:26px;border:1px solid #d9dbde;border-radius:3px;font-size:8.900px;line-height:25px;text-align:center;color:#6b707b;letter-spacing:-.05px">+ Agrega una nueva página</div>

<!-- zoom pill -->
<div class="abs" style="left:681.500px;top:508.500px;width:98px;height:29px;border-radius:14.500px;background:#404654;border:1.500px solid #f2f3f5"></div>
<svg class="abs" style="left:680px;top:505px" width="100" height="34" viewBox="680 505 100 34">
  <g fill="none" stroke="#fff" stroke-width="1.300" stroke-linejoin="round" stroke-linecap="round">
    <rect x="692.300" y="518" width="10.400" height="8" rx="1"/>
    <path d="M697.500 516 V518 M695.300 529.500 L697.500 526.200 L699.700 529.500"/>
  </g>
  <path d="M696.300 520.300 L699.300 522 L696.300 523.700Z" fill="#fff"/>
  <path d="M710.800 514 V531" stroke="#6b7180" stroke-width="1"/>
  <path d="M720.500 522.800 H726.700" stroke="#fff" stroke-width="1.500"/>
  <path d="M759.300 522.800 H765.500 M762.400 519.700 V525.900" stroke="#fff" stroke-width="1.500"/>
</svg>
<div class="abs" id="z1" style="left:735.0px;top:518px;font-size:7.800px;line-height:10px;font-weight:bold;color:#fff;white-space:nowrap;letter-spacing:-0.73px">59 %</div>

<!-- page controls -->
<svg class="abs" style="left:700px;top:245px" width="26" height="105" viewBox="700 245 26 105">
  <g fill="none" stroke="#e1e3e5" stroke-width="1.100" stroke-linecap="round" stroke-linejoin="round">
    <path d="M708.500 255.500 L712.500 250.800 L716.500 255.500"/><path d="M708.500 286.500 L712.500 291.200 L716.500 286.500"/>
    <path d="M709.700 335.500 H715.700 V343.500 H709.700Z M711.500 334 H714"/>
  </g>
  <g fill="none" stroke="#9a9fa8" stroke-width="1.200" stroke-linejoin="round">
    <path d="M714 311.500 V308.200 H707.300 V316.700 H710.200"/><rect x="710.800" y="311.700" width="7" height="9"/>
  </g>
</svg>
<div class="abs" id="pg1" style="left:707.500px;top:261px;font-size:15px;line-height:16px;color:#a2a6ad">1</div>
</div>
</body>
</html>
